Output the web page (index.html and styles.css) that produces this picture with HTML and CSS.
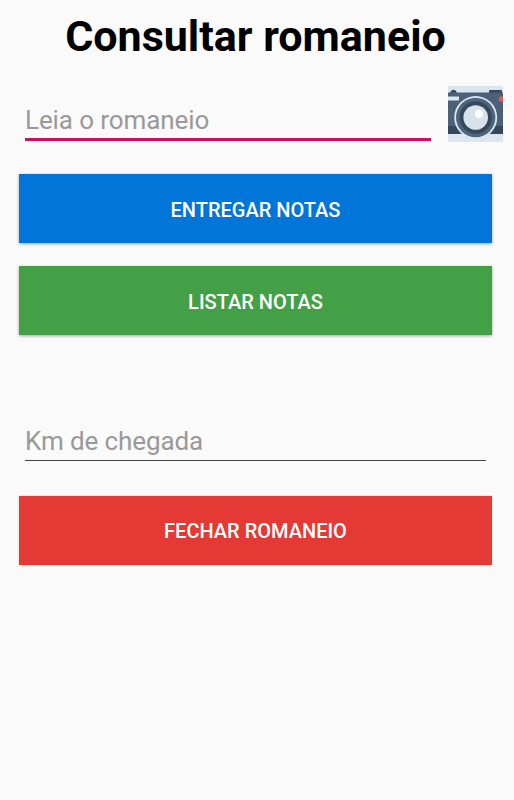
FILE: index.html
```html
<!DOCTYPE html>
<html lang="pt-BR">
<head>
    <meta charset="UTF-8" />
    <meta name="viewport" content="width=device-width, initial-scale=1" />
    <title>Consultar romaneio</title>
    <link rel="stylesheet" href="styles.css">
</head>
<body>
<h1>Consultar romaneio</h1>

<form>
    <div class="leitura">
        <input class="campo ativo" type="text" placeholder="Leia o romaneio" aria-label="Leia o romaneio" />
        <button class="camera" type="button" aria-label="Abrir câmera">
            <svg viewBox="0 0 55 56" xmlns="http://www.w3.org/2000/svg">
                <rect width="55" height="56" fill="#dce6ef"/>
                <!-- Corpo -->
                <path d="M2 7 L3 5 Q5.500 2.500 8 5 L9 7 Z" fill="#35495e"/>
                <rect x="41" y="4" width="13" height="5" rx="1" fill="#35495e"/>
                <rect y="6.500" width="55" height="41.500" fill="#4a6179"/>
                <rect y="40" width="55" height="8" fill="#34485d"/>
                <rect y="10.500" width="11" height="4" fill="#dce6ef"/>
                <circle cx="53.500" cy="13" r="2.800" fill="#e2574c"/>
                <!-- Lente -->
                <circle cx="27.700" cy="31.500" r="21.500" fill="#dce6ef"/>
                <circle cx="27.700" cy="31.500" r="19.700" fill="#4e667d"/>
                <circle cx="27.700" cy="31.500" r="16.200" fill="#35495e"/>
                <circle cx="27.700" cy="31.500" r="12.300" fill="#d7e2ed"/>
                <circle cx="31" cy="28" r="4.200" fill="#fff"/>
            </svg>
        </button>
    </div>

    <button class="botao azul" type="button">Entregar notas</button>
    <button class="botao verde" type="button">Listar notas</button>

    <input class="campo km" type="text" placeholder="Km de chegada" aria-label="Km de chegada" />

    <button class="botao vermelho" type="button">Fechar romaneio</button>
</form>
</body>
</html>
```
FILE: styles.css
```css
* {
    box-sizing: border-box;
}
body {
    margin: 0;
    min-height: 100vh;
    background: #fafafa;
    font-family: Roboto, sans-serif;
}
h1 {
    margin: 0;
    padding: 10px 3px 0 0;
    height: 86px;
    font-size: 43px;
    line-height: 52px;
    font-weight: 700;
    color: #000;
    text-align: center;
}
form {
    display: flex;
    flex-direction: column;
    padding: 0 22px 0 19px;
}
.leitura {
    display: flex;
    justify-content: space-between;
    height: 88px;
    margin-right: -11px;
    padding-left: 6px;
}
.campo {
    display: block;
    height: 41px;
    padding: 2px 0 0;
    border: 0;
    border-bottom: 1px solid #444;
    border-radius: 0;
    outline: none;
    background: none;
    font-family: inherit;
    font-size: 26px;
    letter-spacing: -0.1px;
    color: #222;
}
.campo::placeholder {
    color: #999;
    opacity: 1;
}
.campo.ativo {
    width: 406px;
    height: 42px;
    margin-top: 13px;
    border-bottom: 3px solid #c2185b;
}
.camera {
    width: 55px;
    height: 56px;
    padding: 0;
    border: 0;
    background: none;
}
.camera svg {
    display: block;
    width: 55px;
    height: 56px;
}
.botao {
    height: 69px;
    padding: 2px 0 0;
    border: 0;
    font-family: inherit;
    font-size: 20px;
    font-weight: 500;
    text-transform: uppercase;
    color: #fff;
    box-shadow: 0 1px 3px rgba(0,0,0,0.35);
}
.azul {
    background: #0275d8;
}
.verde {
    margin-top: 23px;
    background: #43a047;
}
.km {
    margin: 85px 6px 35px;
}
.vermelho {
    padding: 0;
    background: #e53935;
    box-shadow: 0 0 2px rgba(0,0,0,0.2);
}
```
